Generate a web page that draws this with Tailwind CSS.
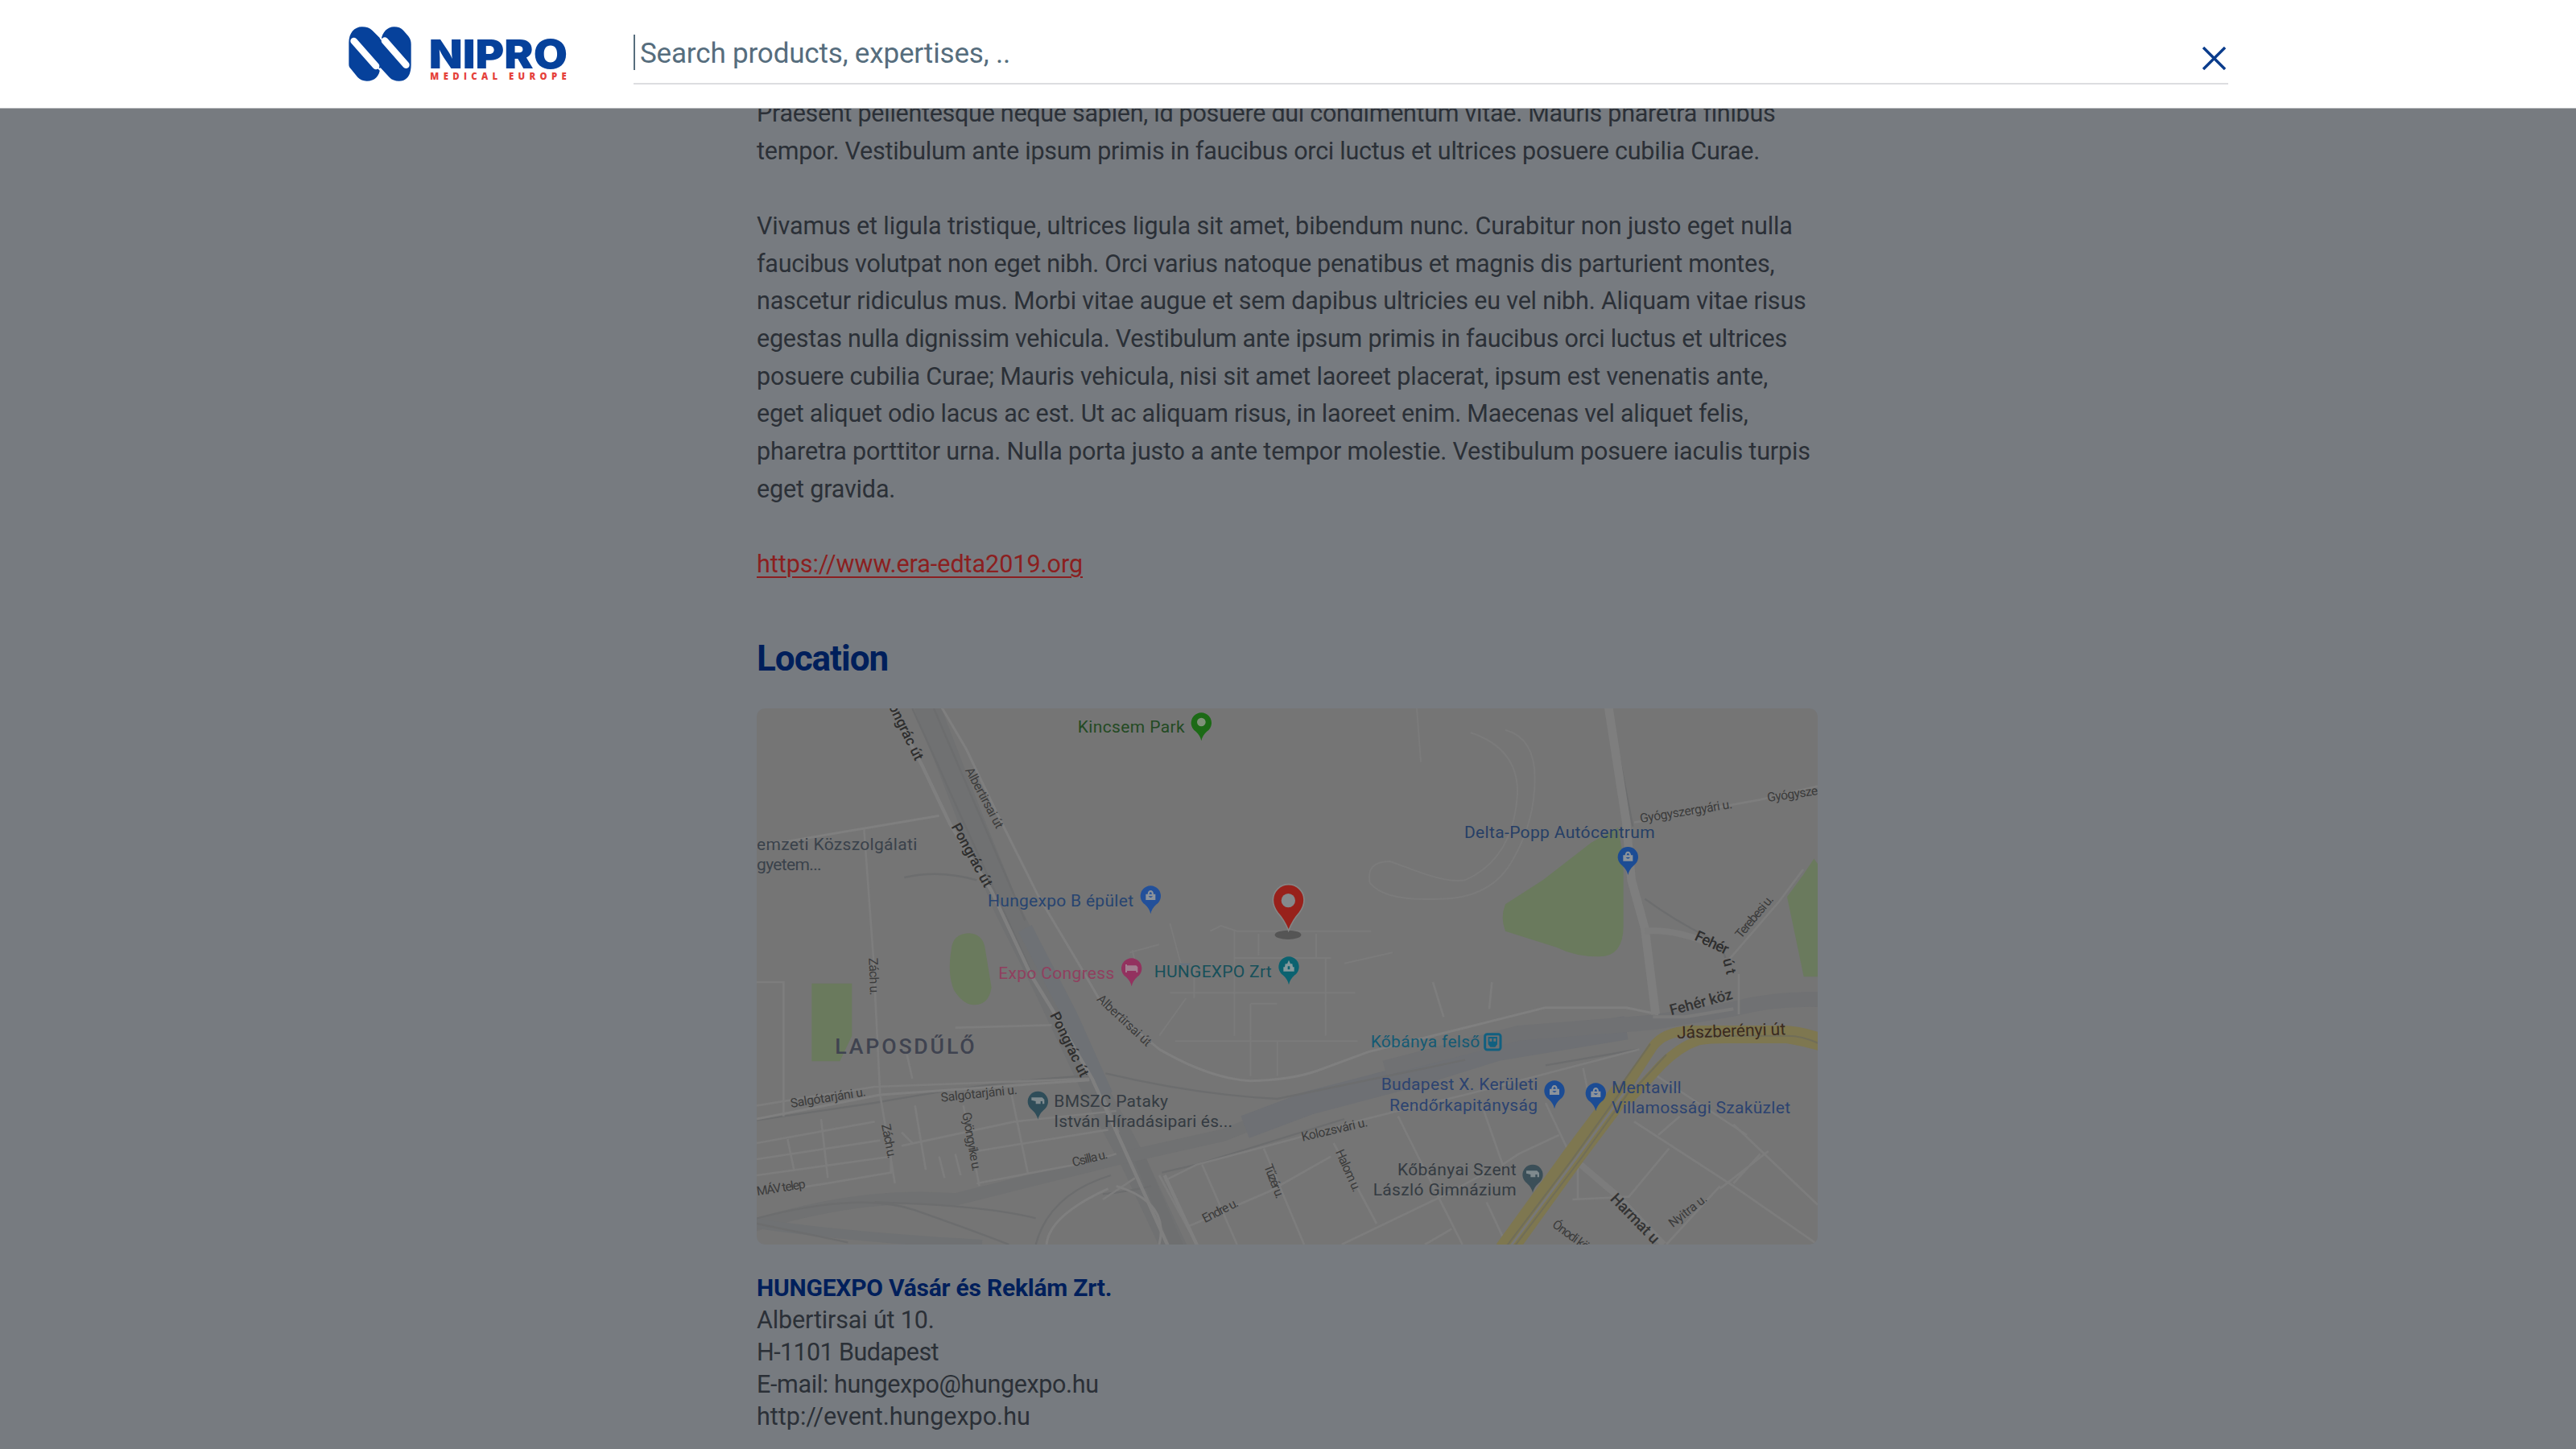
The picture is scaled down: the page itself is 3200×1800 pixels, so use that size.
<!DOCTYPE html>
<html lang="en">
<head>
<meta charset="utf-8">
<title>Nipro Medical Europe</title>
<script src="https://cdn.jsdelivr.net/npm/@tailwindcss/browser@4"></script>
</head>
<body class="h-[1800px] w-[3200px] overflow-hidden bg-[#777b80] font-['Roboto',sans-serif] text-[#2b3037]">

<header class="relative z-10 flex h-[135px] items-start border-b border-[#b4b7ba] bg-white pl-[433px]">
  <svg class="mt-[33px] h-[68px] w-[271px] shrink-0" viewBox="40 38 813 204" role="img" aria-label="Nipro Medical Europe">
    <path fill="#06419b" d="M41 178V98C41 62 62 39 90 39C106 39 119 43 129 53L162 86C166 60 184 39 210 39C224 39 236 43 244 52L263 74C270 83 273 92 273 104V180C273 218 258 241 228 241C214 241 201 237 192 227L158 190C156 222 138 241 108 241C94 241 83 236 74 227L49 196C43 190 41 186 41 178Z"/>
    <path stroke="#fff" stroke-width="26" stroke-linecap="round" d="M60 92L142 185M175 91L254 181"/>
    <path stroke="#fff" stroke-width="6" d="M158 80L172 94M143 184L158 200"/>
    <text x="339" y="193" textLength="517" lengthAdjust="spacingAndGlyphs" class="font-['Inter'] text-[150px] font-black" fill="#06419b">NIPRO</text>
    <text x="344" y="237" textLength="508" class="font-['Open_Sans'] text-[34px] font-extrabold" fill="#e5413a">MEDICAL EUROPE</text>
  </svg>
  <div class="ml-[83px] flex h-[105px] w-[1981px] items-start justify-between border-b-2 border-[#dcdde0]">
    <div class="mt-[43px] flex h-[44px] items-center border-l-2 border-[#566d7d] pt-[2px] pl-[6px] text-[35px] leading-none tracking-[-0.17px] text-[#566d7d]">Search products, expertises, ..</div>
    <svg class="mt-[58px] mr-[3px] size-[29px]" viewBox="0 0 29 29" fill="none" stroke="#0a3c8c" stroke-width="3.4"><path d="M1 1L28 28M28 1L1 28"/></svg>
  </div>
</header>

<main class="-mt-[17px] ml-[940px] w-[1318px]">
  <div class="text-[30.5px] leading-[46.667px] whitespace-nowrap">
    <p>
      <span class="block tracking-[-0.28px]">Praesent pellentesque neque sapien, id posuere dui condimentum vitae. Mauris pharetra finibus</span>
      <span class="block tracking-[-0.25px]">tempor. Vestibulum ante ipsum primis in faucibus orci luctus et ultrices posuere cubilia Curae.</span>
    </p>
    <p class="mt-[46.667px]">
      <span class="block tracking-[-0.11px]">Vivamus et ligula tristique, ultrices ligula sit amet, bibendum nunc. Curabitur non justo eget nulla</span>
      <span class="block tracking-[-0.28px]">faucibus volutpat non eget nibh. Orci varius natoque penatibus et magnis dis parturient montes,</span>
      <span class="block tracking-[-0.19px]">nascetur ridiculus mus. Morbi vitae augue et sem dapibus ultricies eu vel nibh. Aliquam vitae risus</span>
      <span class="block tracking-[-0.25px]">egestas nulla dignissim vehicula. Vestibulum ante ipsum primis in faucibus orci luctus et ultrices</span>
      <span class="block tracking-[-0.19px]">posuere cubilia Curae; Mauris vehicula, nisi sit amet laoreet placerat, ipsum est venenatis ante,</span>
      <span class="block tracking-[-0.26px]">eget aliquet odio lacus ac est. Ut ac aliquam risus, in laoreet enim. Maecenas vel aliquet felis,</span>
      <span class="block tracking-[-0.17px]">pharetra porttitor urna. Nulla porta justo a ante tempor molestie. Vestibulum posuere iaculis turpis</span>
      <span class="block tracking-[-0.16px]">eget gravida.</span>
    </p>
    <p class="mt-[46.667px]"><a class="tracking-[-0.03px] text-[#8b1f20] underline decoration-2 underline-offset-[5px]">https://www.era-edta2019.org</a></p>
  </div>

  <h2 class="mt-[65px] h-[90px] text-[44px] leading-[56px] font-bold tracking-[-1px] text-[#001f5b]">Location</h2>

  <svg class="block h-[666px] w-[1318px] rounded-[10px] bg-[#757575]" viewBox="60 60 3954 1998" fill="none">
    <!-- parks -->
    <g fill="#6a7a5d">
      <path d="M3270 505L3290 620V870Q3290 985 3200 985Q3110 985 3040 950L2850 890Q2830 840 2850 790L2990 700L3170 560Z"/>
      <path d="M4000 620L4015 640V1060H3962L3900 762L3960 680Z"/>
      <path d="M785 960Q790 900 850 898Q905 900 912 960L935 1100Q925 1165 870 1165Q830 1165 795 1110Q770 1050 785 960Z"/>
      <path d="M265 1085H415V1280L370 1375H265Z"/>
    </g>
    <!-- rail corridors -->
    <g stroke-linejoin="round">
      <path stroke="#707172" stroke-width="95" d="M690 40L860 480L990 800L1130 1080L1330 1500L1460 1740L1620 2080"/>
      <path stroke="#6e7175" stroke-width="56" d="M1060 880L1230 1210L1360 1500"/>
      <path stroke="#6e6f70" stroke-width="44" d="M1480 1720L1630 2070"/>
      <path stroke="#707172" stroke-width="46" d="M40 1990Q450 1860 800 1890L1400 1740L1800 1650L2100 1530"/>
      <path stroke="#6e7074" stroke-width="88" d="M1880 1620L2120 1530L2500 1430L2820 1330L3300 1250"/>
      <path stroke="#707173" stroke-width="56" d="M2400 1400L2900 1270L3400 1230L3700 1180Q3850 1140 4020 1145"/>
      <path stroke="#6f7173" stroke-width="36" d="M60 1980Q400 2030 900 2058"/>
    </g>
    <g stroke="#6c6d6e" stroke-width="7">
      <path d="M60 1595L500 1530Q1000 1440 1300 1430M60 1960Q450 1860 650 1930T1000 2058M400 2050L60 1980M500 1900Q900 1910 1100 1960M1360 1420Q1700 1500 2000 1515L2700 1370M1570 1790L1700 1760L2250 1590M3240 60L3325 500M3370 770Q3480 850 3600 910Q3660 950 3670 990M3000 1390L3350 1330M640 60L1100 1080M720 60L1060 850M1100 2058Q1150 1870 1380 1800"/>
      <path d="M610 690Q740 660 880 700M1530 1840Q1450 1860 1350 1870"/>
    </g>
    <!-- minor streets -->
    <g stroke="#7d7d7d" stroke-width="8">
      <path d="M460 510L495 990L500 1100L520 1500L575 1830M60 1080H160V1580M60 1540L500 1470L1300 1440M60 1680L500 1600M60 1740L520 1670M60 1800L560 1730L560 1790L200 1850M300 1590L325 1810M175 1665L200 1785M650 1540L690 1780M830 1540L890 1840M1010 1500L1070 1790M600 1690L1020 1600L1400 1560M600 1640L640 1680M880 1710L1370 1630M880 1830L1300 1750L1400 1720M740 1730L760 1810M800 1720L820 1800M800 1250L1160 1240M620 1350L640 1440"/>
      <path d="M1350 1890L1470 1810M1580 1820L1700 1760L2040 1670L2330 1590L2450 1560L2700 1500L3350 1330M1560 1800L1700 2058M1720 1760L1850 2058M1670 1990L1970 1860L2200 1730M1950 1700L2100 2058M2210 1680L2370 1980M2240 2058L2600 1885L2780 1790M2450 1580L2560 1800L2690 2058M2550 2058L2650 2000M2770 1560L2840 1760L2900 1720L3050 1650M3000 1530L3090 1720M2780 1900L2850 2050M3140 1400L3160 1500"/>
      <path d="M3330 1600L3700 1840L4014 2058M3460 1700L3310 1880L3100 1890M3420 1650L3500 1580M3700 1830L3800 1720M3650 1840L3450 2058M3700 1610L4014 1910M3400 1420L3750 1650M3120 1760V1890M3650 1850L3830 1710M3330 485L3800 400L4014 350M3960 660L3870 780L3680 1000M3720 1050V1200M2800 1080L2790 1180M2580 1080L2620 1210"/>
      <path stroke-width="6" stroke="#7b7b7b" d="M2520 60L2535 260M2720 150Q2900 210 2895 380Q2880 620 2700 700Q2640 710 2530 670L2420 630Q2330 630 2345 710Q2400 780 2600 770Q2800 770 2880 620Q2960 480 2960 320Q2960 170 2850 140M1750 890L1790 870L1850 890H2350M1450 970L1560 940M1840 890V1280M1930 900V980M1840 990H2200M2145 900V990M2180 990V1280M1600 1120H2290M1900 1160H2000M1900 1160V1430M1620 1300H2300M2000 1300V1430M1690 1020V1140M1460 960L1480 1050M1560 1280L1660 1140M2250 1010L2430 970M1600 860L1640 1010M1350 1500L1410 1640"/>
    </g>
    <!-- main roads -->
    <g stroke="#7f7f7f" stroke-linejoin="round">
      <path stroke-width="13" d="M555 40L680 280L780 490L935 740L1080 1050L1160 1180L1310 1440L1420 1680L1600 2080M1580 1800L1710 2080"/>
      <path stroke-width="9" d="M740 40L840 210L960 460L1110 760L1265 1020L1340 1150L1560 1330Q1750 1440 1900 1448Q2050 1445 2150 1410L2340 1340L3000 1175H3300L3420 1200M60 575L740 460M60 1590L520 1500L1300 1445M1560 2058Q1600 1900 1400 1840M1140 2058Q1150 1950 1370 1850"/>
      <path stroke-width="32" stroke="#7e7e7e" d="M3232 40L3300 480L3320 700L3370 880L3410 1200"/>
      <path stroke-width="24" stroke="#7c7c7c" d="M3370 890Q3480 880 3620 940M3130 1760L3260 1870L3440 2058"/>
      <path stroke-width="12" stroke="#7a7a7a" d="M3400 1210L3520 1210L3700 1180"/>
    </g>
    <!-- Jászberényi út -->
    <g stroke-linejoin="round">
      <path stroke="#7e7750" stroke-width="82" d="M2850 2080L3110 1720L3290 1480"/>
      <path stroke="#7e7750" stroke-width="36" d="M3270 1520L3400 1320Q3440 1265 3540 1260H3880Q3950 1260 4030 1290M3310 1520L3430 1390Q3500 1320 3570 1297Q3620 1288 3700 1290H3900Q3960 1300 4030 1320"/>
      <path stroke="#706d58" stroke-width="6" d="M2850 2070L3100 1740L3300 1460M2880 2070L3130 1740L3310 1490M3270 1480L3390 1310M3540 1280H3900Q3960 1280 4020 1310M3330 1480L3450 1350"/>
      <path stroke="#777" stroke-width="9" d="M2865 2070L3115 1735L3310 1470"/>
    </g>
    <!-- street names -->
    <g class="font-['Roboto'] text-[47px]" fill="#3b3b3b">
      <text class="text-[54px] font-medium" transform="translate(536 22) rotate(64)" textLength="262" fill="#2e2e2e">Pongrác út</text>
      <text class="text-[54px] font-medium" transform="translate(784 500) rotate(61.5)" textLength="262" fill="#2e2e2e">Pongrác út</text>
      <text class="text-[54px] font-medium" transform="translate(1152 1202) rotate(64)" textLength="262" fill="#2e2e2e">Pongrác út</text>
      <text transform="translate(836 290) rotate(62)" textLength="250">Albertirsai út</text>
      <text transform="translate(1325 1146) rotate(43)" textLength="258">Albertirsai út</text>
      <text transform="translate(478 990) rotate(88)" textLength="140">Zách u.</text>
      <text transform="translate(525 1612) rotate(79)" textLength="130">Zách u.</text>
      <text transform="translate(826 1568) rotate(80)" textLength="222">Gyöngyike u.</text>
      <text transform="translate(188 1548) rotate(-9)" textLength="284">Salgótarjáni u.</text>
      <text transform="translate(748 1526) rotate(-6)" textLength="286">Salgótarjáni u.</text>
      <text transform="translate(62 1876) rotate(-9)" textLength="184">MÁV telep</text>
      <text transform="translate(1240 1768) rotate(-14)" textLength="134">Csilla u.</text>
      <text transform="translate(2094 1673) rotate(-13)" textLength="252">Kolozsvári u.</text>
      <text transform="translate(1730 1978) rotate(-27)" textLength="144">Endre u.</text>
      <text transform="translate(1950 1766) rotate(69)" textLength="132">Tűzér u.</text>
      <text transform="translate(2216 1712) rotate(66)" textLength="168">Halom u.</text>
      <text transform="translate(3354 486) rotate(-9)" textLength="348">Gyógyszergyári u.</text>
      <text transform="translate(3828 408) rotate(-8)" textLength="190">Gyógysze</text>
      <text transform="translate(3728 920) rotate(-50)" textLength="192">Terebesi u.</text>
      <text class="text-[56px] font-medium" transform="translate(3552 922) rotate(25)" textLength="132" fill="#2e2e2e">Fehér</text>
      <text class="text-[54px] font-medium" transform="translate(3660 996) rotate(76)" textLength="60" fill="#2e2e2e">út</text>
      <text class="text-[56px] font-medium" transform="translate(3468 1204) rotate(-15)" textLength="240" fill="#333">Fehér köz</text>
      <text class="text-[63px]" transform="translate(3490 1290) rotate(-2)" textLength="405" fill="#3a2a20">Jászberényi út</text>
      <text class="text-[58px] font-medium" transform="translate(3238 1890) rotate(46)" textLength="250" fill="#333">Harmat u.</text>
      <text transform="translate(3474 1996) rotate(-38)" textLength="167">Nyitra u.</text>
      <text transform="translate(3022 1990) rotate(36)" textLength="158">Ónodi kö</text>
    </g>
    <!-- place names -->
    <g class="font-['Roboto'] text-[63px]">
      <text x="60" y="588" textLength="598" fill="#3a424b">emzeti Közszolgálati</text>
      <text x="60" y="664" textLength="242" fill="#3a424b">gyetem...</text>
      <text x="1256" y="150" textLength="399" fill="#234a23">Kincsem Park</text>
      <text x="921" y="798" textLength="543" fill="#274470">Hungexpo B épület</text>
      <text x="961" y="1068" textLength="432" fill="#90405f">Expo Congress</text>
      <text x="1541" y="1062" textLength="438" fill="#17505a">HUNGEXPO Zrt</text>
      <text x="2697" y="543" textLength="710" fill="#263f66">Delta-Popp Autócentrum</text>
      <text x="352" y="1348" textLength="520" class="text-[80px] font-medium" fill="#3f4350">LAPOSDŰLŐ</text>
      <text x="1168" y="1545" textLength="425" fill="#343b42">BMSZC Pataky</text>
      <text x="1168" y="1620" textLength="665" fill="#343b42">István Híradásipari és...</text>
      <text x="2348" y="1323" textLength="407" fill="#145a73">Kőbánya felső</text>
      <text x="2387" y="1483" textLength="584" fill="#2c4370">Budapest X. Kerületi</text>
      <text x="2418" y="1560" textLength="552" fill="#2c4370">Rendőrkapitányság</text>
      <text x="3246" y="1493" textLength="260" fill="#2c4370">Mentavill</text>
      <text x="3246" y="1570" textLength="666" fill="#2c4370">Villamossági Szaküzlet</text>
      <text x="2448" y="1801" textLength="443" fill="#343b42">Kőbányai Szent</text>
      <text x="2357" y="1875" textLength="534" fill="#343b42">László Gimnázium</text>
    </g>
    <!-- place pins -->
    <defs>
      <path id="pin" d="M0 68Q-4 48 -22 32A38 38 0 1 1 22 32Q4 48 0 68Z"/>
      <path id="bag" fill="#8c939b" fill-rule="evenodd" d="M-18 18V-4H-11Q-10 -18 0 -18Q10 -18 11 -4H18V18ZM-5 -4H5Q4 -11 0 -11Q-4 -11 -5 -4ZM-8 4Q0 14 8 4Z"/>
      <path id="cap" fill="#7f8a8e" d="M-24 -12H16L24 -4V12H17V2H10V12H-8V2L-24 -2Z"/>
    </defs>
    <use href="#pin" x="1717" y="113" fill="#1c6a16"/><circle cx="1717" cy="111" r="16" fill="#7f9179"/>
    <use href="#pin" x="1528" y="758" fill="#22509a"/><use href="#bag" x="1528" y="756"/>
    <use href="#pin" x="1457" y="1028" fill="#93325f"/><path fill="#a17f90" d="M1434 1014H1440V1018H1474L1480 1024V1044H1474V1038H1440V1044H1434Z"/>
    <use href="#pin" x="2043" y="1022" fill="#0b6270"/><path fill="#86999c" fill-rule="evenodd" d="M2023 1040V1024H2028L2030 1012H2037L2043 998L2049 1012H2056L2058 1024H2063V1040ZM2039 1021V1033H2047V1021Z"/>
    <use href="#pin" x="3307" y="613" fill="#1c4c94"/><use href="#bag" x="3307" y="611"/>
    <use href="#pin" x="3033" y="1484" fill="#1c4c94"/><use href="#bag" x="3033" y="1482"/>
    <use href="#pin" x="3187" y="1493" fill="#1c4c94"/><use href="#bag" x="3187" y="1491"/>
    <use href="#pin" x="1108" y="1524" fill="#2f4d59"/><use href="#cap" x="1108" y="1522"/>
    <use href="#pin" x="2952" y="1797" fill="#3b4f58"/><use href="#cap" x="2952" y="1795"/>
    <rect x="2774" y="1274" width="58" height="58" rx="8" stroke="#116080" stroke-width="9"/>
    <path fill="#116080" fill-rule="evenodd" d="M2786 1284H2820V1312L2812 1322H2794L2786 1312ZM2791 1290V1301H2800V1290ZM2806 1290V1301H2815V1290Z"/>
    <path fill="#66727f" d="M1636 1010H1678L1670 1018H1644Z"/>
    <!-- venue marker -->
    <ellipse cx="2040" cy="904" rx="49" ry="17" fill="#555"/>
    <path fill="#98211b" stroke="#858585" stroke-width="5" d="M2042 888Q2026 848 2002 822Q1984 798 1984 774A58 58 0 0 1 2100 774Q2100 798 2082 822Q2058 848 2042 888Z"/>
    <circle cx="2041" cy="776" r="26" fill="#85898c"/>
  </svg>

  <address class="mt-[34px] text-[30.5px] leading-[40px] whitespace-nowrap not-italic">
    <span class="block text-[30px] font-bold tracking-[-0.22px] text-[#001f5b]">HUNGEXPO Vásár és Reklám Zrt.</span>
    <span class="block tracking-[-0.15px]">Albertirsai út 10.</span>
    <span class="block tracking-[-0.6px]">H-1101 Budapest</span>
    <span class="block tracking-[-0.36px]">E-mail: hungexpo@hungexpo.hu</span>
    <span class="block tracking-[0px]">http://event.hungexpo.hu</span>
  </address>
</main>
</body>
</html>
